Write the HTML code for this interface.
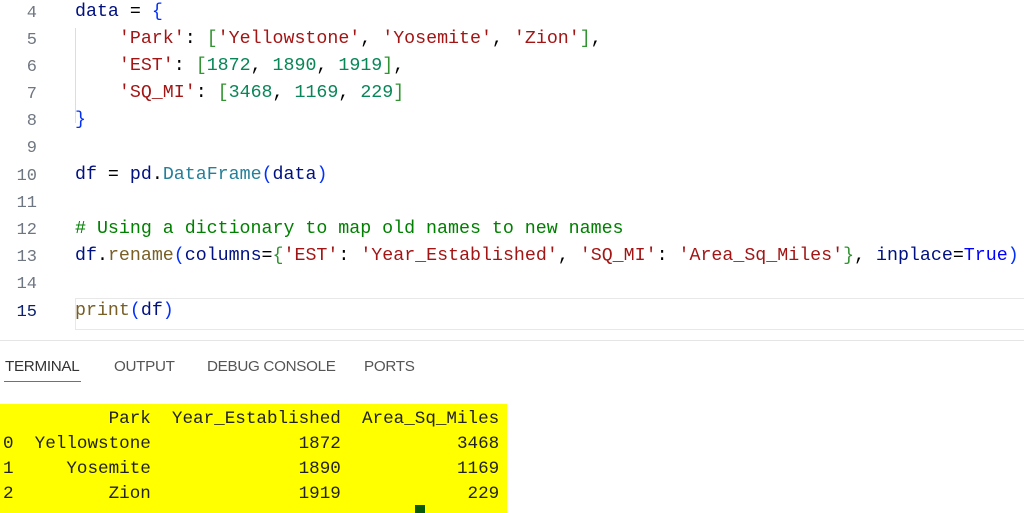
<!DOCTYPE html>
<html><head><style>
body{margin:0;width:1024px;height:513px;overflow:hidden;background:#fff;position:relative;font-family:"Liberation Mono",monospace}
.ln{position:absolute;left:0;width:37px;text-align:right;font-size:17px;color:#6e7681}
.code{position:absolute;left:75px;font-size:18.3px;white-space:pre;color:#000}
.v{color:#001080}.s{color:#a31515}.n{color:#098658}.b1{color:#0431fa}.b2{color:#319331}.c{color:#008000}.f{color:#795e26}.t{color:#267f99}.k{color:#0000ff}
.tab{position:absolute;top:358px;font-family:"Liberation Sans",sans-serif;font-size:15.2px;color:#555;letter-spacing:-0.3px}
.term{position:absolute;left:0;top:404px;width:507px;height:109px;background:#ffff00}
.tl{position:absolute;left:3px;font-size:17.6px;white-space:pre;color:#222}
</style></head><body>
<div style="position:absolute;left:75px;top:298px;width:949px;height:30px;border:1px solid #e8e8e8;border-right:none"></div>
<div style="position:absolute;left:75px;top:28px;width:1px;height:95px;background:#ddd"></div>
<div class="ln" style="top:4px">4</div><div class="code" style="top:2px"><span class="v">data</span> = <span class="b1">{</span></div>
<div class="ln" style="top:31px">5</div><div class="code" style="top:29px">    <span class="s">'Park'</span>: <span class="b2">[</span><span class="s">'Yellowstone'</span>, <span class="s">'Yosemite'</span>, <span class="s">'Zion'</span><span class="b2">]</span>,</div>
<div class="ln" style="top:58px">6</div><div class="code" style="top:56px">    <span class="s">'EST'</span>: <span class="b2">[</span><span class="n">1872</span>, <span class="n">1890</span>, <span class="n">1919</span><span class="b2">]</span>,</div>
<div class="ln" style="top:85px">7</div><div class="code" style="top:83px">    <span class="s">'SQ_MI'</span>: <span class="b2">[</span><span class="n">3468</span>, <span class="n">1169</span>, <span class="n">229</span><span class="b2">]</span></div>
<div class="ln" style="top:112px">8</div><div class="code" style="top:110px"><span class="b1">}</span></div>
<div class="ln" style="top:139px">9</div>
<div class="ln" style="top:167px">10</div><div class="code" style="top:165px"><span class="v">df</span> = <span class="v">pd</span>.<span class="t">DataFrame</span><span class="b1">(</span><span class="v">data</span><span class="b1">)</span></div>
<div class="ln" style="top:194px">11</div>
<div class="ln" style="top:221px">12</div><div class="code" style="top:219px"><span class="c"># Using a dictionary to map old names to new names</span></div>
<div class="ln" style="top:248px">13</div><div class="code" style="top:246px"><span class="v">df</span>.<span class="f">rename</span><span class="b1">(</span><span class="v">columns</span>=<span class="b2">{</span><span class="s">'EST'</span>: <span class="s">'Year_Established'</span>, <span class="s">'SQ_MI'</span>: <span class="s">'Area_Sq_Miles'</span><span class="b2">}</span>, <span class="v">inplace</span>=<span class="k">True</span><span class="b1">)</span></div>
<div class="ln" style="top:275px">14</div>
<div class="ln" style="top:303px;color:#0b216f">15</div><div class="code" style="top:301px"><span class="f">print</span><span class="b1">(</span><span class="v">df</span><span class="b1">)</span></div>
<div style="position:absolute;left:0;top:340px;width:1024px;height:1px;background:#e5e5e5"></div>
<div class="tab" style="left:5px;color:#333">TERMINAL</div>
<div style="position:absolute;left:4px;top:381px;width:77px;height:1px;background:#4a7aa5"></div>
<div class="tab" style="left:114px">OUTPUT</div>
<div class="tab" style="left:207px">DEBUG CONSOLE</div>
<div class="tab" style="left:364px">PORTS</div>
<div class="term"></div>
<div class="tl" style="top:409px">          Park  Year_Established  Area_Sq_Miles</div>
<div class="tl" style="top:434px">0  Yellowstone              1872           3468</div>
<div class="tl" style="top:459px">1     Yosemite              1890           1169</div>
<div class="tl" style="top:484px">2         Zion              1919            229</div>
<div style="position:absolute;left:415px;top:505px;width:10px;height:8px;background:#0a5a0a"></div>
</body></html>
